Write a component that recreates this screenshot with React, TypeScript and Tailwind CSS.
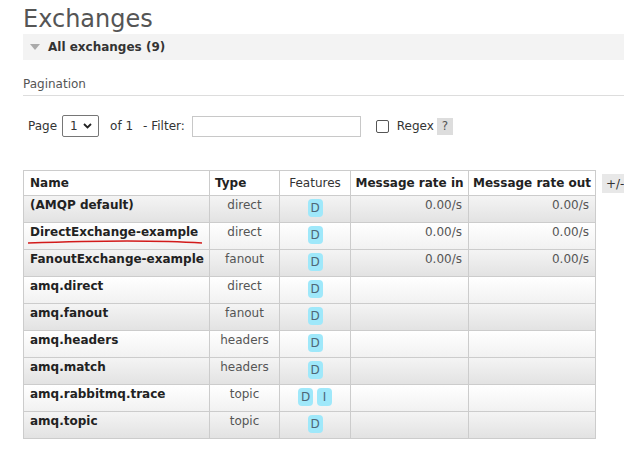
interface Exchange {
  name: string;
  type: string;
  features: string[];
  rateIn?: string;
  rateOut?: string;
  underline?: boolean;
}

const exchanges: Exchange[] = [
  { name: "(AMQP default)", type: "direct", features: ["D"], rateIn: "0.00/s", rateOut: "0.00/s" },
  { name: "DirectExchange-example", type: "direct", features: ["D"], rateIn: "0.00/s", rateOut: "0.00/s", underline: true },
  { name: "FanoutExchange-example", type: "fanout", features: ["D"], rateIn: "0.00/s", rateOut: "0.00/s" },
  { name: "amq.direct", type: "direct", features: ["D"] },
  { name: "amq.fanout", type: "fanout", features: ["D"] },
  { name: "amq.headers", type: "headers", features: ["D"] },
  { name: "amq.match", type: "headers", features: ["D"] },
  { name: "amq.rabbitmq.trace", type: "topic", features: ["D", "I"] },
  { name: "amq.topic", type: "topic", features: ["D"] },
];

function Badge({ label }: { label: string }) {
  return (
    <span className="inline-flex items-center justify-center w-[15px] h-[18px] rounded-[4px] bg-[#9fe8fa] text-[#4d6677] text-[12px] leading-none">
      {label}
    </span>
  );
}

export default function App() {
  return (
    <div
      className="w-[624px] h-[451px] overflow-hidden bg-white text-[12px] text-[#484848]"
      style={{ fontFamily: "Verdana, 'DejaVu Sans', sans-serif" }}
    >
      <h1 className="pl-[23px] pt-[4px] text-[24px] leading-[30px] text-[#555]">Exchanges</h1>

      {/* Section header */}
      <div className="ml-[23px] h-[26px] bg-[#f3f3f3] flex items-center gap-[8px] pl-[7px]">
        <svg width="10" height="6" viewBox="0 0 10 6">
          <polygon points="0,0 10,0 5,6" fill="#aaa" />
        </svg>
        <span className="font-bold text-[#333]">All exchanges (9)</span>
      </div>

      {/* Pagination */}
      <div className="ml-[23px] mt-[15px] pb-[2px] border-b border-[#ddd] text-[#555]">Pagination</div>

      <div className="ml-[28px] mt-[19px] h-[22px] flex items-center text-[#333]">
        <span>Page</span>
        <div className="ml-[5px] w-[37px] h-[22px] border border-[#767676] rounded-[2px] flex items-center pl-[7px] gap-[5px]">
          <span>1</span>
          <svg width="9" height="6" viewBox="0 0 9 6">
            <polyline points="1,1 4.5,4.5 8,1" fill="none" stroke="#222" strokeWidth="1.8" />
          </svg>
        </div>
        <span className="ml-[11px]">of 1</span>
        <span className="ml-[10px]">- Filter:</span>
        <div className="ml-[7px] w-[169px] h-[21px] border border-[#c8c8c8]" />
        <div className="ml-[15px] w-[13px] h-[13px] border border-[#555] rounded-[2px]" />
        <span className="ml-[8px]">Regex</span>
        <span className="ml-[3px] w-[16px] h-[17px] bg-[#ddd] flex items-center justify-center text-[#555]">?</span>
      </div>

      {/* Table */}
      <div className="mt-[33px] ml-[23px] flex items-start">
        <table className="table-fixed w-[572px] border-collapse border border-[#ccc] text-[12px]">
          <thead>
            <tr className="h-[25px] bg-white">
              <th className="w-[186px] border border-[#ccc] text-left pl-[6px] font-bold text-[#222]">Name</th>
              <th className="w-[70px] border border-[#ccc] text-left pl-[5px] font-bold text-[#222]">Type</th>
              <th className="w-[71px] border border-[#ccc] font-normal text-[#333]">Features</th>
              <th className="w-[118px] border border-[#ccc] font-bold text-[#222] whitespace-nowrap">Message rate in</th>
              <th className="w-[127px] border border-[#ccc] font-bold text-[#222] whitespace-nowrap">Message rate out</th>
            </tr>
          </thead>
          <tbody>
            {exchanges.map((ex, i) => (
              <tr
                key={ex.name}
                className={
                  i % 2 === 0
                    ? "h-[27px] bg-gradient-to-b from-[#f4f4f4] to-[#e2e2e2]"
                    : "h-[27px] bg-gradient-to-b from-[#ffffff] to-[#f1f1f1]"
                }
              >
                <td className="border border-[#ccc] pl-[6px] align-top pt-0 font-bold text-[#222] relative whitespace-nowrap">
                  {ex.name}
                  {ex.underline && (
                    <svg className="absolute left-[3px] top-[16px]" width="176" height="6" viewBox="0 0 176 6">
                      <path d="M1 4 C 30 3, 60 2, 100 2 S 160 3, 175 4" fill="none" stroke="#d21b1b" strokeWidth="1.3" />
                    </svg>
                  )}
                </td>
                <td className="border border-[#ccc] text-center align-top pt-0 text-[#555]">{ex.type}</td>
                <td className="border border-[#ccc] text-center align-top pt-[3px]">
                  <div className="flex justify-center gap-[4px]">
                    {ex.features.map((f) => (
                      <Badge key={f} label={f} />
                    ))}
                  </div>
                </td>
                <td className="border border-[#ccc] text-right pr-[6px] align-top pt-0 text-[#555]">{ex.rateIn}</td>
                <td className="border border-[#ccc] text-right pr-[6px] align-top pt-0 text-[#555]">{ex.rateOut}</td>
              </tr>
            ))}
          </tbody>
        </table>
        <span className="ml-[6px] mt-[4px] px-[4px] h-[19px] bg-[#e8e8e8] text-[#333] flex items-center whitespace-nowrap">+/-</span>
      </div>
    </div>
  );
}
